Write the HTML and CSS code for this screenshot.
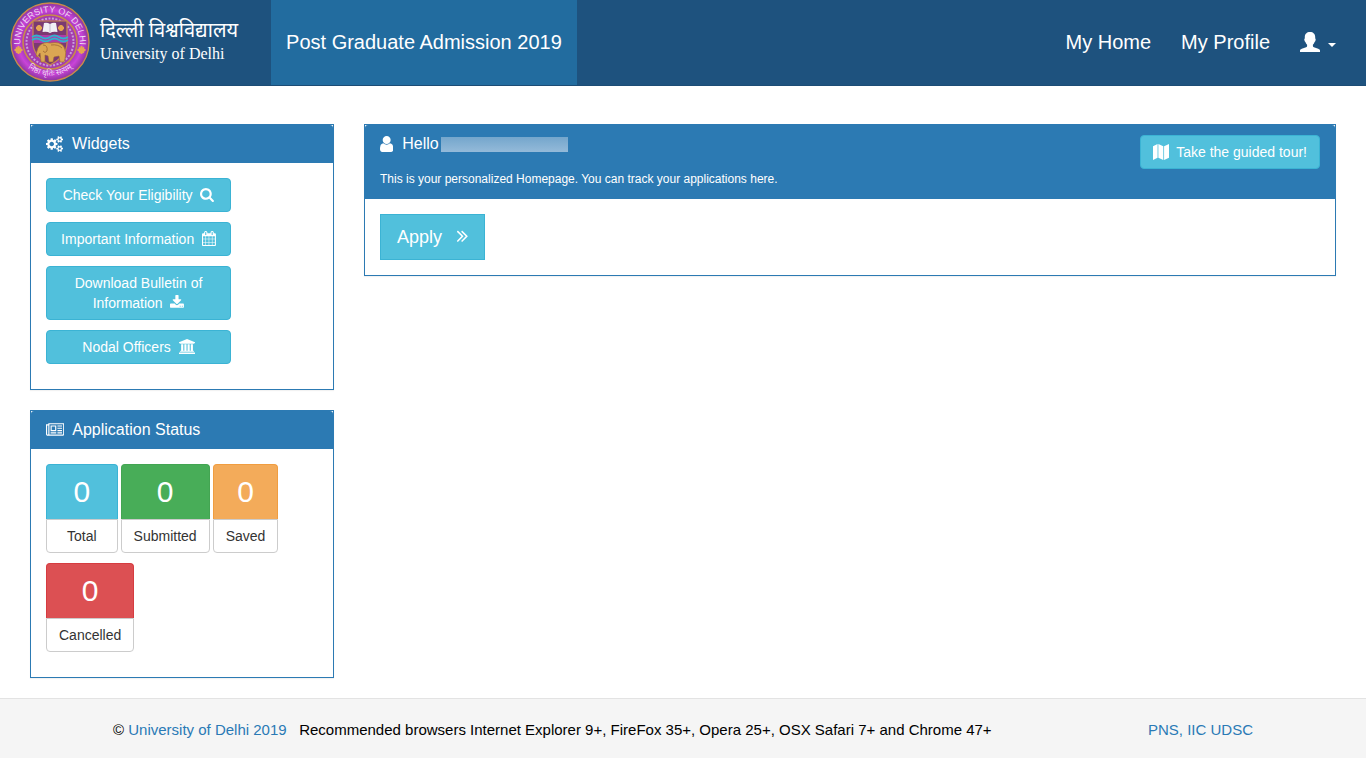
FILE: index.html
```html
<!DOCTYPE html>
<html lang="en">
<head>
	<meta charset="UTF-8">
	<meta name="viewport" content="width=device-width, initial-scale=1">
	<title>Post Graduate Admission 2019</title>
	<link rel="stylesheet" href="styles.css">
</head>
<body>
	<nav class="navbar">
		<a class="brand" href="#">
			<svg class="seal" viewBox="0 0 80 80" aria-hidden="true">
				<defs>
					<radialGradient id="sealFill">
						<stop offset="0.6" stop-color="#8b2fa8"/>
						<stop offset="0.82" stop-color="#c944d8"/>
						<stop offset="1" stop-color="#8a359d"/>
					</radialGradient>
					<path id="arcTop" d="M14.400 54.800A29.600 29.600 0 1 1 65.600 54.800"/>
					<path id="arcBottom" d="M8 53A35 35 0 0 0 72 53"/>
				</defs>
				<circle cx="40" cy="40" r="39" fill="url(#sealFill)" stroke="#c98a4b" stroke-width="1.400"/>
				<circle cx="40" cy="40" r="27" fill="#a43cae" stroke="#c98a4b" stroke-width="1.600"/>
				<circle cx="40" cy="40" r="23.500" fill="none" stroke="#c9a0dc" stroke-width="2" stroke-dasharray="2 1.500"/>
				<path d="M23 19h34v22q0 13-17 22-17-9-17-22z" fill="#7b3a72" stroke="#c98a4b" stroke-width="1.200"/>
				<path d="M24 33h32v8H24z" fill="#b03ba8"/>
				<path d="M22 35q4.500-3 9 0t9 0 9 0 9 0M22 38q4.500-3 9 0t9 0 9 0 9 0" fill="none" stroke="#2fb3cf" stroke-width="1.800"/>
				<path d="M34 21q3-1 6 1 3-2 6-1l1.500 9q-4.500-1-7.500 1-3-2-7.500-1z" fill="#f1f0f5"/>
				<path d="M40 22v8" stroke="#a99bb5" stroke-width=".6"/>
				<path d="M27 54q-2-1 0-5 1-6 7-8 3-1 6 0 11-2 14 4 3 5 1 12l-1 3h-4l-1-6-5 1-1 5h-4l-1-6-3-1v7h-4l-1-9-2 3q-1 2-2 0z" fill="#dba653" stroke="#9b6431" stroke-width=".6"/>
				<path d="M33 43q5 0 4 6-2 3-4 0M41 43q7-1 11 3" fill="none" stroke="#9b6431" stroke-width=".8"/>
				<g stroke="#e6a651" stroke-width="1.800">
					<path d="M26 26h6M29 23v6M27 24l4 4M31 24l-4 4M48 26h6M51 23v6M49 24l4 4M53 24l-4 4"/>
					<path d="M4.500 48h8M8.500 44v8M6 45.500l5 5M11 45.500l-5 5M67.500 48h8M71.500 44v8M69 45.500l5 5M74 45.500l-5 5"/>
				</g>
				<text class="seal-text"><textPath href="#arcTop" startOffset="50%" text-anchor="middle">UNIVERSITY OF DELHI</textPath></text>
				<text class="seal-text seal-motto"><textPath href="#arcBottom" startOffset="50%" text-anchor="middle">निष्ठा धृतिः सत्यम्</textPath></text>
			</svg>
			<span class="brand-name">
				<span class="brand-hindi" lang="hi">दिल्ली विश्वविद्यालय</span>
				<span class="brand-english">University of Delhi</span>
			</span>
		</a>
		<a class="nav-link active" href="#">Post Graduate Admission 2019</a>
		<div class="nav-right">
			<a class="nav-link" href="#">My Home</a>
			<a class="nav-link" href="#">My Profile</a>
			<button class="nav-link nav-user" type="button" aria-label="Account">
				<svg class="icon-account" viewBox="0 0 20 20" aria-hidden="true"><path d="M10 0c3.200 0 5.200 2 5.200 5v1.500c.6.200.6 1.200.3 2-.2.700-.5 1.300-.9 1.500-.3 1.100-.9 2-1.700 2.700V14c0 .6.300.9 1 1.200l4.300 1.600c1.200.5 1.800 1 1.800 2V20H0v-1.200c0-1 .6-1.500 1.800-2l4.300-1.600c.7-.3 1-.6 1-1.200v-1.300c-.8-.7-1.400-1.600-1.700-2.700-.4-.2-.7-.8-.9-1.500-.3-.8-.3-1.800.3-2V5c0-3 2-5 5.200-5z"/></svg>
				<span class="caret"></span>
			</button>
		</div>
	</nav>

	<main class="row">
		<aside class="col-side">
			<section class="panel">
				<h2 class="panel-heading">
					<svg class="icon" viewBox="0 0 1920 1792" aria-hidden="true"><path d="M896 896q0-106-75-181t-181-75-181 75-75 181 75 181 181 75 181-75 75-181zm768 512q0-52-38-90t-90-38-90 38-38 90q0 53 37.500 90.500t90.500 37.500 90.500-37.500 37.500-90.500zm0-1024q0-52-38-90t-90-38-90 38-38 90q0 53 37.500 90.500t90.500 37.500 90.500-37.500 37.500-90.500zm-384 421v185q0 10-7 19.500t-16 10.500l-155 24q-11 35-32 76 34 48 90 115 7 11 7 20 0 12-7 19-23 30-82.500 89.500t-78.500 59.500q-11 0-21-7l-115-90q-37 19-77 31-11 108-23 155-7 24-30 24h-186q-11 0-20-7.500t-10-17.500l-23-153q-34-10-75-31l-118 89q-7 7-20 7-11 0-21-8-144-133-144-160 0-9 7-19 10-14 41-53t47-61q-23-44-35-82l-152-24q-10-1-17-9.500t-7-19.500v-185q0-10 7-19.500t16-10.500l155-24q11-35 32-76-34-48-90-115-7-11-7-20 0-12 7-20 22-30 82-89t79-59q11 0 21 7l115 90q34-18 77-32 11-108 23-154 7-24 30-24h186q11 0 20 7.500t10 17.500l23 153q34 10 75 31l118-89q8-7 20-7 11 0 21 8 144 133 144 160 0 8-7 19-12 16-42 54t-45 60q23 48 34 82l152 23q10 2 17 10.500t7 19.500zm640 533v140q0 16-149 31-12 27-30 52 51 113 51 138 0 4-4 7-122 71-124 71-8 0-46-47t-52-68q-20 2-30 2t-30-2q-14 21-52 68t-46 47q-2 0-124-71-4-3-4-7 0-25 51-138-18-25-30-52-149-15-149-31v-140q0-16 149-31 13-29 30-52-51-113-51-138 0-4 4-7 4-2 35-20t59-34 30-16q8 0 46 46.500t52 67.500q20-2 30-2t30 2q51-71 92-112l6-2q4 0 124 70 4 3 4 7 0 25-51 138 17 23 30 52 149 15 149 31zm0-1024v140q0 16-149 31-12 27-30 52 51 113 51 138 0 4-4 7-122 71-124 71-8 0-46-47t-52-68q-20 2-30 2t-30-2q-14 21-52 68t-46 47q-2 0-124-71-4-3-4-7 0-25 51-138-18-25-30-52-149-15-149-31v-140q0-16 149-31 13-29 30-52-51-113-51-138 0-4 4-7 4-2 35-20t59-34 30-16q8 0 46 46.500t52 67.500q20-2 30-2t30 2q51-71 92-112l6-2q4 0 124 70 4 3 4 7 0 25-51 138 17 23 30 52 149 15 149 31z"/></svg>&nbsp; Widgets
				</h2>
				<div class="panel-body widgets">
					<a class="btn" href="#">Check Your Eligibility&nbsp; <svg class="icon" viewBox="64 0 1664 1792" aria-hidden="true"><path d="M1216 832q0-185-131.500-316.500t-316.500-131.500-316.500 131.500-131.500 316.500 131.500 316.500 316.500 131.500 316.500-131.500 131.500-316.500zm512 832q0 52-38 90t-90 38q-54 0-90-38l-343-342q-179 124-399 124-143 0-273.500-55.500t-225-150-150-225-55.500-273.500 55.500-273.500 150-225 225-150 273.500-55.500 273.500 55.500 225 150 150 225 55.500 273.500q0 220-124 399l343 343q37 37 37 90z"/></svg></a>
					<a class="btn" href="#">Important Information&nbsp; <svg class="icon" viewBox="64 0 1664 1792" aria-hidden="true"><path d="M192 1664h288v-288h-288v288zm352 0h320v-288h-320v288zm-352-352h288v-320h-288v320zm352 0h320v-320h-320v320zm-352-384h288v-288h-288v288zm736 736h320v-288h-320v288zm-384-736h320v-288h-320v288zm768 736h288v-288h-288v288zm-384-352h320v-320h-320v320zm-352-864v-288q0-13-9.500-22.500t-22.500-9.500h-64q-13 0-22.500 9.500t-9.500 22.500v288q0 13 9.500 22.500t22.500 9.500h64q13 0 22.500-9.500t9.500-22.500zm736 864h288v-320h-288v320zm-384-384h320v-288h-320v288zm384 0h288v-288h-288v288zm32-480v-288q0-13-9.500-22.500t-22.500-9.500h-64q-13 0-22.500 9.500t-9.500 22.500v288q0 13 9.500 22.500t22.500 9.500h64q13 0 22.500-9.500t9.500-22.500zm384-64v1280q0 52-38 90t-90 38h-1408q-52 0-90-38t-38-90v-1280q0-52 38-90t90-38h128v-96q0-66 47-113t113-47h64q66 0 113 47t47 113v96h384v-96q0-66 47-113t113-47h64q66 0 113 47t47 113v96h128q52 0 90 38t38 90z"/></svg></a>
					<a class="btn" href="#">Download Bulletin of Information&nbsp; <svg class="icon" viewBox="64 0 1664 1792" aria-hidden="true"><path d="M1344 1344q0-26-19-45t-45-19-45 19-19 45 19 45 45 19 45-19 19-45zm256 0q0-26-19-45t-45-19-45 19-19 45 19 45 45 19 45-19 19-45zm128-224v320q0 40-28 68t-68 28h-1472q-40 0-68-28t-28-68v-320q0-40 28-68t68-28h465l135 136q58 56 136 56t136-56l136-136h464q40 0 68 28t28 68zm-325-569q17 41-14 70l-448 448q-18 19-45 19t-45-19l-448-448q-31-29-14-70 17-39 59-39h256v-448q0-26 19-45t45-19h256q26 0 45 19t19 45v448h256q42 0 59 39z"/></svg></a>
					<a class="btn" href="#">Nodal Officers&nbsp; <svg class="icon" viewBox="0 0 1920 1792" aria-hidden="true"><path d="M960 0l960 384v128h-128q0 26-20.500 45t-48.500 19h-1526q-28 0-48.500-19t-20.500-45h-128v-128zm-704 640h256v768h128v-768h256v768h128v-768h256v768h128v-768h256v768h59q28 0 48.500 19t20.500 45v64h-1664v-64q0-26 20.500-45t48.500-19h59v-768zm1595 960q28 0 48.500 19t20.500 45v128h-1920v-128q0-26 20.500-45t48.500-19h1782z"/></svg></a>
				</div>
			</section>

			<section class="panel">
				<h2 class="panel-heading">
					<svg class="icon" viewBox="0 0 2048 1792" aria-hidden="true"><path d="M1024 512h-384v384h384v-384zm128 640v128h-640v-128h640zm0-768v640h-640v-640h640zm640 768v128h-512v-128h512zm0-256v128h-512v-128h512zm0-256v128h-512v-128h512zm0-256v128h-512v-128h512zm-1536 960v-960h-128v960q0 26 19 45t45 19 45-19 19-45zm1664 0v-1088h-1536v1088q0 33-11 64h1483q26 0 45-19t19-45zm128-1216v1216q0 80-56 136t-136 56h-1664q-80 0-136-56t-56-136v-1088h256v-128h1792z"/></svg>&nbsp; Application Status
				</h2>
				<div class="panel-body stats">
					<a class="stat stat-total" href="#"><span class="stat-count">0</span><span class="stat-label">Total</span></a>
					<a class="stat stat-submitted" href="#"><span class="stat-count">0</span><span class="stat-label">Submitted</span></a>
					<a class="stat stat-saved" href="#"><span class="stat-count">0</span><span class="stat-label">Saved</span></a>
					<a class="stat stat-cancelled" href="#"><span class="stat-count">0</span><span class="stat-label">Cancelled</span></a>
				</div>
			</section>
		</aside>

		<div class="col-main">
			<section class="panel">
				<header class="panel-heading welcome">
					<div>
						<h1 class="welcome-title">
							<svg class="icon" viewBox="256 128 1280 1536" aria-hidden="true"><path d="M1536 1399q0 109-62.500 187t-150.500 78h-854q-88 0-150.500-78t-62.500-187q0-85 8.500-160.500t31.500-152 58.500-131 94-89 134.500-34.500q131 128 313 128t313-128q76 0 134.500 34.500t94 89 58.500 131 31.500 152 8.500 160.500zm-256-887q0 159-112.500 271.500t-271.500 112.500-271.500-112.500-112.500-271.500 112.500-271.500 271.500-112.500 271.500 112.500 112.500 271.500z"/></svg>&nbsp; Hello<span class="user-name"></span>
						</h1>
						<p class="welcome-text">This is your personalized Homepage. You can track your applications here.</p>
					</div>
					<button class="btn" type="button"><svg class="icon" viewBox="0 0 14 14" aria-hidden="true"><path d="M0 2l4-2v12l-4 2zM4.700 0l4.300 2v12l-4.300-2zM9.700 2L14 0v12l-4.300 2z"/></svg>&nbsp; Take the guided tour!</button>
				</header>
				<div class="panel-body">
					<a class="btn btn-apply" href="#">Apply &nbsp; <svg class="icon" viewBox="407 128 956 1600" aria-hidden="true"><path d="M979 960q0 13-10 23l-466 466q-10 10-23 10t-23-10l-50-50q-10-10-10-23t10-23l393-393-393-393q-10-10-10-23t10-23l50-50q10-10 23-10t23 10l466 466q10 10 10 23zm384 0q0 13-10 23l-466 466q-10 10-23 10t-23-10l-50-50q-10-10-10-23t10-23l393-393-393-393q-10-10-10-23t10-23l50-50q10-10 23-10t23 10l466 466q10 10 10 23z"/></svg></a>
				</div>
			</section>
		</div>
	</main>

	<footer class="footer">
		<div class="container">
			<span>© <a href="#">University of Delhi 2019</a> &nbsp; Recommended browsers Internet Explorer 9+, FireFox 35+, Opera 25+, OSX Safari 7+ and Chrome 47+</span>
			<a href="#">PNS, IIC UDSC</a>
		</div>
	</footer>
</body>
</html>
```
FILE: styles.css
```css
*{
	box-sizing: border-box;
}
body{
	margin: 0;
	min-height: 100vh;
	display: flex;
	flex-direction: column;
	font-family: "Liberation Sans", Arial, sans-serif;
	font-size: 14px;
	line-height: 20px;
	color: #333;
	background-color: #fff;
}
a{
	color: #2a7ab5;
	text-decoration: none;
}
h1, h2, p{
	margin: 0;
	font-weight: normal;
}
button{
	font-family: inherit;
	cursor: pointer;
}
.icon{
	height: 15px;
	width: auto;
	vertical-align: -2px;
	fill: currentColor;
}
.panel-heading .icon{
	height: 16px;
	vertical-align: -3px;
}

/* top bar */
.navbar{
	display: flex;
	min-height: 86px;
	padding-right: 15px;
	background-color: #1e527e;
	border-bottom: 1px solid #1c4c75;
}
.brand{
	display: flex;
	align-items: center;
	gap: 10px;
	padding: 0 33px 2px 10px;
	color: #fff;
}
.seal{
	width: 80px;
	height: 80px;
}
.seal-text{
	font-family: "Liberation Sans", "Noto Sans", sans-serif;
	font-size: 9px;
	fill: #eed9f2;
}
.seal-motto{
	font-size: 8px;
}
.brand-name{
	display: flex;
	flex-direction: column;
}
.brand-hindi{
	font-family: "Noto Sans Devanagari", "Noto Sans", sans-serif;
	font-size: 20px;
	line-height: 24px;
}
.brand-english{
	font-family: "Liberation Serif", "Times New Roman", serif;
	font-size: 16px;
	line-height: 20px;
}
.nav-link{
	display: flex;
	align-items: center;
	padding: 0 15px 2px;
	border: 0;
	background: none;
	font-size: 20px;
	color: #fff;
}
.nav-link.active{
	background-color: #226c9f;
}
.nav-right{
	display: flex;
	margin-left: auto;
}
.nav-user{
	gap: 8px;
}
.icon-account{
	width: 20px;
	height: 20px;
	fill: currentColor;
}
.caret{
	border-top: 4px solid;
	border-left: 4px solid transparent;
	border-right: 4px solid transparent;
	margin-top: 6px;
}

/* page columns */
.row{
	display: flex;
	flex: 1;
	padding: 38px 15px 0;
}
.col-side{
	width: 25%;
	padding: 0 15px;
}
.col-main{
	width: 75%;
	padding: 0 15px;
}

.panel{
	margin-bottom: 20px;
	border: 1px solid #2c7ab3;
	background-color: #fff;
	box-shadow: 0 1px 1px rgba(0, 0, 0, 0.05);
}
.panel-heading{
	padding: 10px 15px;
	border-radius: 3px 3px 0 0;
	background-color: #2c7ab3;
	font-size: 16px;
	line-height: 18px;
	color: #fff;
}
.panel-body{
	padding: 15px;
}

.btn{
	display: inline-block;
	padding: 6px 12px;
	border: 1px solid #3bb3d4;
	border-radius: 4px;
	background-color: #51c0dc;
	font-size: 14px;
	line-height: 20px;
	text-align: center;
	color: #fff;
}
.widgets{
	display: flex;
	flex-direction: column;
	gap: 10px;
	padding-bottom: 25px;
}
.widgets .btn{
	width: 185px;
}
.btn-apply{
	padding: 10px 16px;
	border-radius: 0;
	font-size: 18px;
	line-height: 24px;
	vertical-align: top;
}
.btn-apply .icon{
	height: 18px;
}

/* application counts */
.stats{
	display: flex;
	flex-wrap: wrap;
	gap: 10px 3px;
	padding-bottom: 25px;
}
.stat{
	display: flex;
	flex-direction: column;
	text-align: center;
	color: #333;
}
.stat-count{
	padding: 6px 12px;
	border: 1px solid;
	border-bottom: 0;
	border-radius: 4px 4px 0 0;
	font-size: 30px;
	line-height: 42px;
}
.stat-label{
	padding: 6px 12px;
	border: 1px solid #ccc;
	border-radius: 0 0 4px 4px;
}
.stat-total .stat-label{
	padding: 6px 20px;
}
.stat-total .stat-count{
	background-color: #51c0dc;
	border-color: #3bb3d4;
}
.stat-submitted .stat-count{
	background-color: #48ad58;
	border-color: #43a552;
}
.stat-saved .stat-count{
	background-color: #f3ab5a;
	border-color: #f09d40;
}
.stat-cancelled .stat-count{
	background-color: #dc5053;
	border-color: #d63c40;
}
.stat .stat-count{
	color: #fff;
}

.welcome{
	display: flex;
	justify-content: space-between;
	align-items: flex-start;
}
.welcome-title{
	display: flex;
	align-items: center;
	font-size: 16px;
	line-height: 18px;
}
.user-name{
	width: 127px;
	height: 15px;
	margin-left: 2px;
	background: linear-gradient(#74a6cc, #94bad9);
}
.welcome-text{
	padding: 18px 0 1px;
	font-size: 12px;
	line-height: 17px;
}

.footer{
	padding: 21px 0 18px;
	border-top: 1px solid #e3e3e3;
	background-color: #f5f5f5;
	font-size: 15px;
	color: #000;
}
.container{
	display: flex;
	justify-content: space-between;
	max-width: 1170px;
	margin: 0 auto;
	padding: 0 15px;
}
```
